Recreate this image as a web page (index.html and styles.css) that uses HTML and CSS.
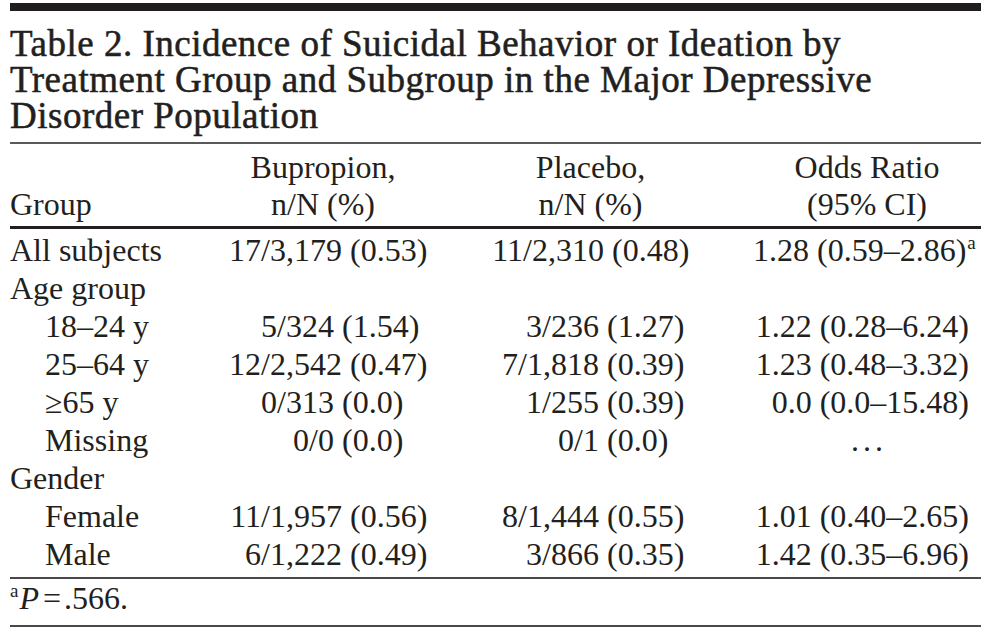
FILE: index.html
```html
<!DOCTYPE html>
<html lang="en">
<head>
<meta charset="utf-8">
<title>Table 2</title>
<link rel="stylesheet" href="styles.css">
</head>
<body>
<div class="page">
  <div class="topbar"></div>
  <h1 class="title">Table 2. Incidence of Suicidal Behavior or Ideation by<br>Treatment Group and Subgroup in the Major Depressive<br>Disorder Population</h1>
  <div class="thead">
    <div class="th th-group">Group</div>
    <div class="th th-bup">Bupropion,<br>n/N (%)</div>
    <div class="th th-pla">Placebo,<br>n/N (%)</div>
    <div class="th th-odds">Odds Ratio<br>(95% CI)</div>
  </div>
  <div class="tbody">
    <div class="row">
      <div class="cell grp">All subjects</div>
      <div class="cell bup wide"><span class="n">17/3,179</span><span class="p">(0.53)</span></div>
      <div class="cell pla wide"><span class="n">11/2,310</span><span class="p">(0.48)</span></div>
      <div class="cell odds">1.28 (0.59–2.86)<sup class="sup">a</sup></div>
    </div>
    <div class="row">
      <div class="cell grp">Age group</div>
      <div class="cell"></div>
      <div class="cell"></div>
      <div class="cell"></div>
    </div>
    <div class="row">
      <div class="cell grp sub">18–24 y</div>
      <div class="cell bup"><span class="n">5/324</span><span class="p">(1.54)</span></div>
      <div class="cell pla"><span class="n">3/236</span><span class="p">(1.27)</span></div>
      <div class="cell odds">1.22 (0.28–6.24)</div>
    </div>
    <div class="row">
      <div class="cell grp sub">25–64 y</div>
      <div class="cell bup wide"><span class="n">12/2,542</span><span class="p">(0.47)</span></div>
      <div class="cell pla"><span class="n">7/1,818</span><span class="p">(0.39)</span></div>
      <div class="cell odds">1.23 (0.48–3.32)</div>
    </div>
    <div class="row">
      <div class="cell grp sub">≥65 y</div>
      <div class="cell bup"><span class="n">0/313</span><span class="p">(0.0)</span></div>
      <div class="cell pla"><span class="n">1/255</span><span class="p">(0.39)</span></div>
      <div class="cell odds">0.0 (0.0–15.48)</div>
    </div>
    <div class="row">
      <div class="cell grp sub">Missing</div>
      <div class="cell bup"><span class="n">0/0</span><span class="p">(0.0)</span></div>
      <div class="cell pla"><span class="n">0/1</span><span class="p">(0.0)</span></div>
      <div class="cell odds na">. . .</div>
    </div>
    <div class="row">
      <div class="cell grp">Gender</div>
      <div class="cell"></div>
      <div class="cell"></div>
      <div class="cell"></div>
    </div>
    <div class="row">
      <div class="cell grp sub">Female</div>
      <div class="cell bup wide"><span class="n">11/1,957</span><span class="p">(0.56)</span></div>
      <div class="cell pla"><span class="n">8/1,444</span><span class="p">(0.55)</span></div>
      <div class="cell odds">1.01 (0.40–2.65)</div>
    </div>
    <div class="row">
      <div class="cell grp sub">Male</div>
      <div class="cell bup wide"><span class="n">6/1,222</span><span class="p">(0.49)</span></div>
      <div class="cell pla"><span class="n">3/866</span><span class="p">(0.35)</span></div>
      <div class="cell odds">1.42 (0.35–6.96)</div>
    </div>
  </div>
  <p class="foot"><sup class="sup">a</sup><i>P</i><span class="eq">=</span>.566.</p>
</div>
</body>
</html>
```

FILE: styles.css
```css
html, body {
  margin: 0;
  padding: 0;
  background: #ffffff;
}

.page {
  width: 971px;
  margin-left: 10px;
  padding-top: 3px;
  color: #231f20;
  font-family: "Liberation Serif", "Times New Roman", serif;
  font-size: 32px;
}

.topbar {
  height: 8px;
  background: #1f1d1e;
}

.title {
  margin: 0;
  padding-top: 15px;
  padding-bottom: 8px;
  font-size: 37px;
  line-height: 36px;
  letter-spacing: 0.5px;
  font-weight: normal;
  -webkit-text-stroke: 0.55px #231f20;
  white-space: nowrap;
  border-bottom: 2px solid #5a5858;
}

.thead {
  display: grid;
  grid-template-columns: 190px 246px 307px 228px;
  padding-top: 5px;
  padding-bottom: 3px;
  border-bottom: 3px solid #231f20;
  line-height: 37px;
}

.th-group {
  align-self: end;
}

.th-bup,
.th-pla,
.th-odds {
  text-align: center;
}

.th-pla {
  padding-right: 18px;
}

.tbody {
  padding-top: 2px;
  padding-bottom: 4px;
  border-bottom: 2px solid #4a4848;
}

.row {
  display: grid;
  grid-template-columns: 190px 246px 307px 228px;
  height: 38px;
  line-height: 38px;
}

.cell {
  white-space: nowrap;
}

.grp.sub {
  padding-left: 35px;
}

.bup,
.pla {
  display: grid;
  column-gap: 8px;
}

.bup {
  grid-template-columns: 134px auto;
}

.bup.wide {
  grid-template-columns: 142px auto;
}

.pla {
  grid-template-columns: 153px auto;
}

.pla.wide {
  grid-template-columns: 158px auto;
}

.n {
  text-align: right;
}

.odds {
  text-align: right;
  padding-right: 12px;
}

.odds.na {
  text-align: center;
  padding-left: 10px;
  letter-spacing: -2px;
}

.sup {
  font-size: 19px;
  line-height: 0;
  vertical-align: 12px;
}

.odds .sup {
  margin-left: 1px;
  margin-right: -6px;
}

.foot {
  margin: 0;
  height: 38px;
  line-height: 38px;
  padding-top: 0;
  padding-bottom: 8px;
  border-bottom: 2px solid #4a4848;
}

.foot .sup {
  margin-right: 1px;
}

.eq {
  margin: 0 3px 0 4px;
}
```
